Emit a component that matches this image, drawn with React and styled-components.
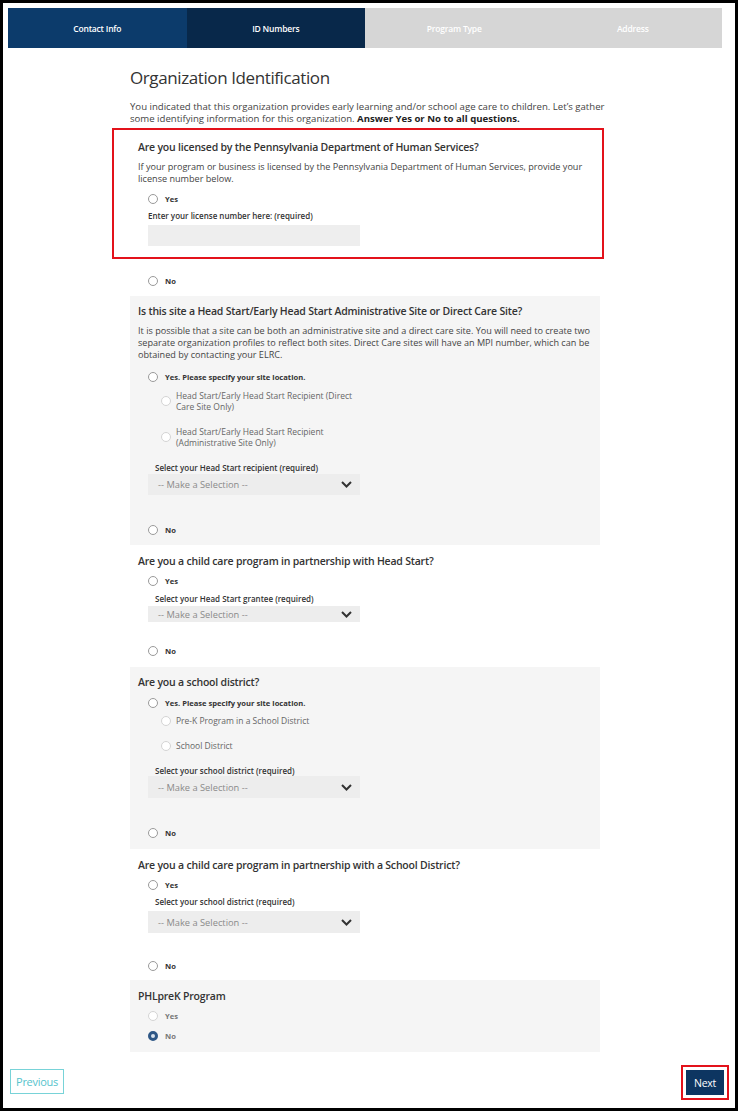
import React from "react";
import styled, { createGlobalStyle } from "styled-components";

const GlobalStyle = createGlobalStyle`
  html, body {
    margin: 0;
    padding: 0;
    background: #fff;
  }
  body {
    font-family: "Open Sans", "Liberation Sans", sans-serif;
    color: #333;
  }
`;

const Frame = styled.div`
  width: 738px;
  height: 1111px;
  box-sizing: border-box;
  border: 3px solid #000;
  padding: 5px 13px 0 5px;
  display: flex;
  flex-direction: column;
  overflow: hidden;

  & > * {
    flex: none;
  }
`;

const Tabs = styled.div`
  display: flex;
  height: 40px;
`;

const Tab = styled.div`
  flex: 1;
  display: flex;
  align-items: center;
  justify-content: center;
  background: ${(p) => p.$bg};
  color: #fff;
  font-size: 8.5px;
  font-weight: 600;
  letter-spacing: -0.2px;
`;

const Column = styled.div`
  width: 470px;
  margin: 0 auto;
`;

const Heading = styled.h1`
  margin: 20px 0 0;
  font-size: 17px;
  line-height: 20px;
  font-weight: 400;
  color: #333;
  letter-spacing: -0.4px;
`;

const Intro = styled.p`
  margin: 13px -12px 0 0;
  font-size: 9.6px;
  line-height: 12px;
  color: #444;

  b {
    font-weight: 700;
    color: #222;
  }
`;

const Section = styled.div`
  background: ${(p) => (p.$shaded ? "#f5f5f5" : "transparent")};
  padding: ${(p) => p.$top ?? 8}px 8px ${(p) => p.$bottom ?? 10}px;
`;

const Highlight = styled.div`
  border: 2px solid #e3121b;
  margin: 3px -12px 0 -26px;
  padding: 10px 10px 11px 24px;
`;

const Question = styled.div`
  font-size: 10.5px;
  line-height: 14px;
  font-weight: 600;
  color: #333;
  letter-spacing: -0.2px;
`;

const Help = styled.p`
  margin: 7px 0 0;
  font-size: 9.1px;
  line-height: 12px;
  color: #444;
`;

const RadioRow = styled.div`
  display: flex;
  align-items: center;
  gap: ${(p) => (p.$sub ? 5 : 7)}px;
  margin-top: ${(p) => p.$mt || 0}px;
  padding-left: ${(p) => (p.$sub ? 23 : 10)}px;
  min-height: ${(p) => (p.$sub ? 11 : 12)}px;
`;

const Circle = styled.span`
  flex: none;
  width: 10px;
  height: 10px;
  box-sizing: border-box;
  border-radius: 50%;
  background: ${(p) => (p.$checked ? "#d9e3ee" : "#fff")};
  border: ${(p) =>
    p.$checked
      ? "3px solid #2e5786"
      : p.$faded
      ? "1px solid #d4d4d4"
      : "1px solid #9a9a9a"};
`;

const RadioLabel = styled.span`
  font-size: ${(p) => (p.$sub ? 8.5 : 7.6)}px;
  line-height: 11px;
  font-weight: ${(p) => (p.$sub ? 400 : 700)};
  color: ${(p) => (p.$sub ? "#666" : p.$faded ? "#777" : "#333")};
  max-width: ${(p) => (p.$sub ? "186px" : "none")};
`;

const FieldLabel = styled.div`
  margin-top: ${(p) => p.$mt ?? 6}px;
  padding-left: ${(p) => p.$indent ?? 10}px;
  font-size: 8px;
  line-height: 10px;
  font-weight: 600;
  color: #333;
`;

const TextInput = styled.div`
  margin: ${(p) => p.$mt ?? 4}px 0 0 10px;
  width: 212px;
  height: 21px;
  background: #eeeeee;
`;

const Select = styled.div`
  margin: ${(p) => p.$mt ?? 3}px 0 0 10px;
  width: 212px;
  height: ${(p) => p.$h || 21}px;
  background: #ededed;
  display: flex;
  align-items: ${(p) => (p.$clip ? "flex-end" : "center")};
  justify-content: space-between;
  padding: 0 8px 0 10px;
  box-sizing: border-box;
  overflow: hidden;
  font-size: 9.3px;
  color: #8a8a8a;

  span {
    line-height: ${(p) => (p.$clip ? "14px" : "normal")};
  }

  svg {
    flex: none;
    margin-bottom: ${(p) => (p.$clip ? 4 : 0)}px;
  }
`;

const Footer = styled.div`
  display: flex;
  justify-content: space-between;
  align-items: center;
  margin: 11px -7px 0 2px;
`;

const PrevButton = styled.div`
  width: 54px;
  height: 25px;
  box-sizing: border-box;
  border: 1.5px solid #78d3d8;
  color: #56c3cc;
  font-size: 11px;
  display: flex;
  align-items: center;
  justify-content: center;
  letter-spacing: -0.3px;
`;

const NextMark = styled.div`
  border: 2px solid #e3121b;
  padding: 3px;
  margin-top: 2px;
`;

const NextButton = styled.div`
  width: 38px;
  height: 25px;
  background: #0d3561;
  color: #fff;
  font-size: 10.5px;
  display: flex;
  align-items: center;
  justify-content: center;
  letter-spacing: -0.3px;
`;

const Chevron = () => (
  <svg width="11" height="7" viewBox="0 0 11 7">
    <path d="M1 1l4.5 4.5L10 1" fill="none" stroke="#333" strokeWidth="2" />
  </svg>
);

const Radio = ({ label, mt, sub, faded, checked }) => (
  <RadioRow $mt={mt} $sub={sub}>
    <Circle $faded={faded || sub} $checked={checked} />
    <RadioLabel $sub={sub} $faded={faded}>
      {label}
    </RadioLabel>
  </RadioRow>
);

const Dropdown = ({ mt, h, clip }) => (
  <Select $mt={mt} $h={h} $clip={clip}>
    <span>-- Make a Selection --</span>
    <Chevron />
  </Select>
);

export default function App() {
  return (
    <>
      <GlobalStyle />
      <Frame>
        <Tabs>
          <Tab $bg="#0c3b6b">Contact Info</Tab>
          <Tab $bg="#08284a">ID Numbers</Tab>
          <Tab $bg="#d6d6d6">Program Type</Tab>
          <Tab $bg="#d6d6d6">Address</Tab>
        </Tabs>

        <Column>
          <Heading>Organization Identification</Heading>
          <Intro>
            You indicated that this organization provides early learning and/or
            school age care to children. Let’s gather some identifying
            information for this organization.{" "}
            <b>Answer Yes or No to all questions.</b>
          </Intro>

          <Section $top={0} $bottom={9}>
            <Highlight>
              <Question>
                Are you licensed by the Pennsylvania Department of Human
                Services?
              </Question>
              <Help>
                If your program or business is licensed by the Pennsylvania
                Department of Human Services, provide your license number below.
              </Help>
              <Radio label="Yes" mt={8} />
              <FieldLabel $mt={6}>
                Enter your license number here: (required)
              </FieldLabel>
              <TextInput $mt={4} />
            </Highlight>
            <Radio label="No" mt={16} />
          </Section>

          <Section $shaded $top={8} $bottom={9}>
            <Question>
              Is this site a Head Start/Early Head Start Administrative Site or
              Direct Care Site?
            </Question>
            <Help>
              It is possible that a site can be both an administrative site and a
              direct care site. You will need to create two separate
              organization profiles to reflect both sites. Direct Care sites
              will have an MPI number, which can be obtained by contacting your
              ELRC.
            </Help>
            <Radio label="Yes. Please specify your site location." mt={10} />
            <Radio
              sub
              mt={7}
              label="Head Start/Early Head Start Recipient (Direct Care Site Only)"
            />
            <Radio
              sub
              mt={14}
              label="Head Start/Early Head Start Recipient (Administrative Site Only)"
            />
            <FieldLabel $mt={15} $indent={17}>
              Select your Head Start recipient (required)
            </FieldLabel>
            <Dropdown mt={1} />
            <Radio label="No" mt={29} />
          </Section>

          <Section $top={9} $bottom={10}>
            <Question>Are you a child care program in partnership with Head Start?</Question>
            <Radio label="Yes" mt={7} />
            <FieldLabel $mt={7} $indent={17}>
              Select your Head Start grantee (required)
            </FieldLabel>
            <Dropdown mt={2} h={16} clip />
            <Radio label="No" mt={23} />
          </Section>

          <Section $shaded $top={8} $bottom={10}>
            <Question>Are you a school district?</Question>
            <Radio label="Yes. Please specify your site location." mt={8} />
            <Radio sub mt={6} label="Pre-K Program in a School District" />
            <Radio sub mt={14} label="School District" />
            <FieldLabel $mt={15} $indent={17}>
              Select your school district (required)
            </FieldLabel>
            <Dropdown mt={0} h={22} />
            <Radio label="No" mt={29} />
          </Section>

          <Section $top={9} $bottom={8}>
            <Question>
              Are you a child care program in partnership with a School District?
            </Question>
            <Radio label="Yes" mt={7} />
            <FieldLabel $mt={6} $indent={17}>
              Select your school district (required)
            </FieldLabel>
            <Dropdown mt={4} h={22} />
            <Radio label="No" mt={27} />
          </Section>

          <Section $shaded $top={9} $bottom={10}>
            <Question>PHLpreK Program</Question>
            <Radio label="Yes" mt={7} faded />
            <Radio label="No" mt={8} checked faded />
          </Section>
        </Column>

        <Footer>
          <PrevButton>Previous</PrevButton>
          <NextMark>
            <NextButton>Next</NextButton>
          </NextMark>
        </Footer>
      </Frame>
    </>
  );
}
